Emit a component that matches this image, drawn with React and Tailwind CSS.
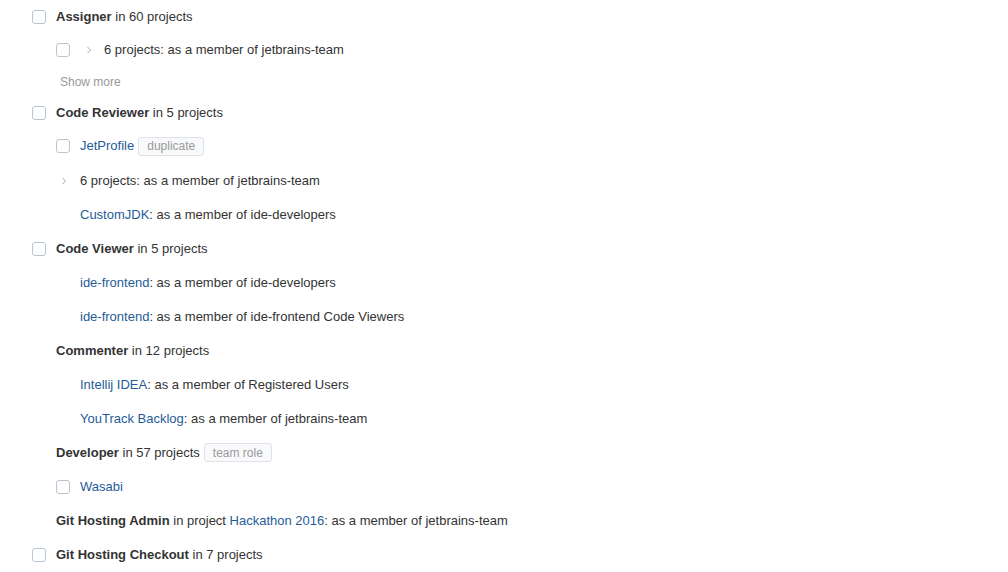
import React from "react";

const LINK = "text-[#1f5c99]";

function Checkbox() {
  return (
    <span className="inline-block w-[14px] h-[14px] shrink-0 rounded-[3px] border border-[#b9c6d2] bg-white" />
  );
}

function Chevron() {
  return (
    <svg width="8" height="8" viewBox="0 0 8 8" className="shrink-0">
      <path d="M2.5 1 L5.5 4 L2.5 7" fill="none" stroke="#a8a8a8" strokeWidth="1" />
    </svg>
  );
}

function Badge({ children }) {
  return (
    <span className="ml-[4px] inline-flex items-center h-[19px] px-[8px] rounded-[3px] border border-[#dfe3e8] bg-[#f8f9fa] text-[12px] text-[#9a9a9a]">
      {children}
    </span>
  );
}

// one line of the list; level 0 starts at x=32, level 1 at x=56
function Row({ level = 0, check, chevron, children, h = "h-[34px]" }) {
  return (
    <div className={`flex items-center ${h} ${level === 0 ? "pl-[32px]" : "pl-[56px]"}`}>
      <span className="w-[24px] shrink-0 flex items-center">
        {check ? <Checkbox /> : chevron ? <span className="pl-[4px] flex"><Chevron /></span> : null}
      </span>
      {check && chevron && (
        <span className="w-[24px] shrink-0 flex items-center pl-[5px]">
          <Chevron />
        </span>
      )}
      <span className="flex items-center whitespace-nowrap">{children}</span>
    </div>
  );
}

function Blank({ level = 1, children, h = "h-[34px]" }) {
  return (
    <div className={`flex items-center ${h} ${level === 0 ? "pl-[56px]" : "pl-[80px]"}`}>
      <span className="flex items-center whitespace-nowrap">{children}</span>
    </div>
  );
}

export default function App() {
  return (
    <div className="w-[1008px] h-[572px] overflow-hidden bg-white pt-[1px] text-[13px] text-[#333]" style={{ fontFamily: '"Liberation Sans", Arial, sans-serif' }}>
      <Row check h="h-[32px]">
        <b className="font-bold">Assigner</b>&nbsp;in 60 projects
      </Row>
      <Row level={1} check chevron>
        6 projects: as a member of jetbrains-team
      </Row>
      <div className="flex items-center h-[30px] pl-[60px] text-[12px] text-[#999]">Show more</div>
      <Row check h="h-[32px]">
        <b className="font-bold">Code Reviewer</b>&nbsp;in 5 projects
      </Row>
      <Row level={1} check>
        <span className={LINK}>JetProfile</span>
        <Badge>duplicate</Badge>
      </Row>
      <Row level={1} chevron h="h-[35px]">
        6 projects: as a member of jetbrains-team
      </Row>
      <Blank>
        <span className={LINK}>CustomJDK</span>: as a member of ide-developers
      </Blank>
      <Row check>
        <b className="font-bold">Code Viewer</b>&nbsp;in 5 projects
      </Row>
      <Blank>
        <span className={LINK}>ide-frontend</span>: as a member of ide-developers
      </Blank>
      <Blank>
        <span className={LINK}>ide-frontend</span>: as a member of ide-frontend Code Viewers
      </Blank>
      <Blank level={0}>
        <b className="font-bold">Commenter</b>&nbsp;in 12 projects
      </Blank>
      <Blank>
        <span className={LINK}>Intellij IDEA</span>: as a member of Registered Users
      </Blank>
      <Blank>
        <span className={LINK}>YouTrack Backlog</span>: as a member of jetbrains-team
      </Blank>
      <Blank level={0} h="h-[33px]">
        <b className="font-bold">Developer</b>&nbsp;in 57 projects
        <Badge>team role</Badge>
      </Blank>
      <Row level={1} check h="h-[35px]">
        <span className={LINK}>Wasabi</span>
      </Row>
      <Blank level={0}>
        <b className="font-bold">Git Hosting Admin</b>&nbsp;in project&nbsp;
        <span className={LINK}>Hackathon 2016</span>: as a member of jetbrains-team
      </Blank>
      <Row check>
        <b className="font-bold">Git Hosting Checkout</b>&nbsp;in 7 projects
      </Row>
    </div>
  );
}
